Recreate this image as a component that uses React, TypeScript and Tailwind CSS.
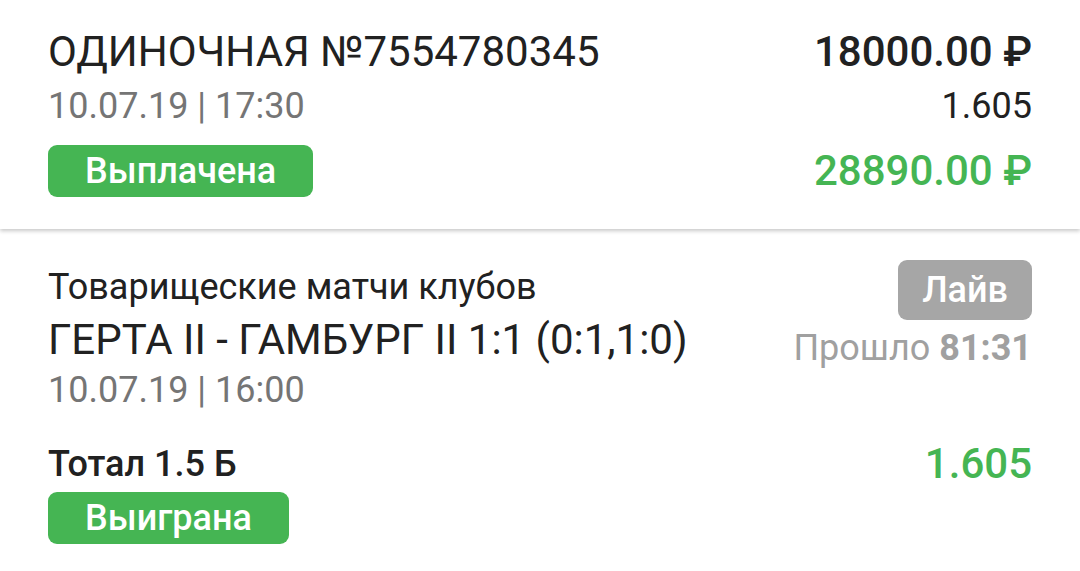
import React from "react";

const GREEN = "text-[#45b553]";

function Badge({ children, className }: { children: React.ReactNode; className?: string }) {
  return (
    <span
      className={
        "inline-flex h-[52px] items-center rounded-[9px] bg-[#45b553] px-[37px] text-[36px] font-medium text-white " +
        (className ?? "")
      }
    >
      {children}
    </span>
  );
}

export default function App() {
  return (
    <div className="min-h-[571px] w-[1080px] bg-white font-['Roboto',sans-serif] text-[#212121]">
      {/* ticket header */}
      <div className="relative z-10 bg-white px-[48px] pt-[28px] pb-[32px] shadow-[0_2px_4px_rgba(0,0,0,0.22)]">
        <div className="flex h-[48px] items-center justify-between">
          <span className="text-[42px] leading-none">ОДИНОЧНАЯ №7554780345</span>
          <span className="text-[42px] leading-none font-medium">18000.00 ₽</span>
        </div>
        <div className="flex h-[60px] items-center justify-between">
          <span className="text-[36px] leading-none text-[#757575]">10.07.19 | 17:30</span>
          <span className="text-[36px] leading-none">1.605</span>
        </div>
        <div className="mt-[9px] flex items-center justify-between">
          <Badge>Выплачена</Badge>
          <span className={"text-[42px] leading-none font-medium " + GREEN}>28890.00 ₽</span>
        </div>
      </div>

      {/* event */}
      <div className="px-[48px] pt-[31px]">
        <div className="flex justify-between">
          <div className="flex flex-col">
            <div className="flex h-[54px] items-center text-[36px] leading-none">
              Товарищеские матчи клубов
            </div>
            <div className="flex h-[52px] items-center text-[42px] leading-none">
              ГЕРТА II - ГАМБУРГ II 1:1 (0:1,1:0)
            </div>
            <div className="flex h-[48px] items-center text-[36px] leading-none text-[#757575]">
              10.07.19 | 16:00
            </div>
          </div>
          <div className="flex flex-col items-end">
            <span className="inline-flex h-[60px] items-center rounded-[9px] bg-[#a6a6a6] px-[24px] text-[36px] font-medium text-white">
              Лайв
            </span>
            <div className="mt-[4px] flex h-[48px] items-center text-[36px] leading-none text-[#a0a0a0]">
              Прошло&nbsp;<span className="font-bold">81:31</span>
            </div>
          </div>
        </div>
        <div className="mt-[26px] flex h-[48px] items-center justify-between">
          <span className="text-[36px] leading-none font-medium">Тотал 1.5 Б</span>
          <span className={"text-[42px] leading-none font-medium " + GREEN}>1.605</span>
        </div>
        <Badge className="mt-[4px]">Выиграна</Badge>
      </div>
    </div>
  );
}
